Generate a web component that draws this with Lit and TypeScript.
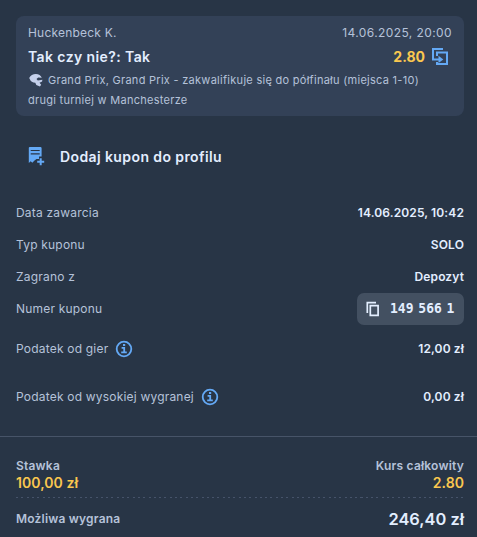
import { LitElement, html, css } from "lit";
import { customElement } from "lit/decorators.js";

const raceIcon = html`<svg class="race" width="14" height="14" viewBox="0 0 14 14"><path fill="currentColor" d="M.2 5C1.500 2.500 4 1 6.800 1c3 0 5 1.300 6 3.800L9.200 4.500 7.500 6l1.300 1.500 4.600-.7-.3 1.800-2.600 1.200 1.700 1.900-1.300 1.800-3.600-1.500-1-2.200C3.800 9.600 1.400 8 1 6.400z"/></svg>`;

const shareIcon = html`<svg class="share" width="18" height="18" viewBox="0 0 18 18" fill="none" stroke="currentColor" stroke-width="2"><path d="M12 2H2v10.500H8M6 9V5.500H16V17H6V15"/><path fill="currentColor" stroke="none" d="M7.500 8.700l4.800 3.700-4.800 3.700z"/></svg>`;

const couponIcon = html`<svg width="18" height="20" viewBox="0 0 18 20"><path fill="currentColor" fill-rule="evenodd" d="M1.600 0h10.800a1.200 1.200 0 0 1 1.200 1.200V9.500H11v2.500H8.500L6.500 13.500l-2.200 2.200-1.600-1.500L.8 16V1.200A1 1 0 0 1 1.600 0zM2.700 2.900v1.200h9V2.900zM2.700 6.200v1.200h9V6.200z"/><path d="M12.700 11.200v7M9.200 14.700h7" stroke="currentColor" stroke-width="2" fill="none"/></svg>`;

const infoIcon = html`<svg class="info" width="18" height="18" viewBox="0 0 18 18" fill="none" stroke="currentColor" stroke-width="1.800"><circle cx="9" cy="9" r="7.300"/><path d="M6.600 7.900h2.600v4.600M6.200 12.400h5.600"/><path d="M8 5h2.200" stroke-width="2"/></svg>`;

const copyIcon = html`<svg class="copy" width="16" height="16" viewBox="0 0 16 16" fill="none" stroke="currentColor" stroke-width="1.700"><path d="M11 1.700H2.300V12"/><path d="M5.300 4.600h7.800v9.800H5.300z"/></svg>`;

@customElement("app-root")
export class AppRoot extends LitElement {
  static styles = css`
    :host {
      display: block;
      height: 537px;
      overflow: hidden;
      background: #283546;
      color: #b5c2d9;
      font: 400 12px/20px Inter, "Liberation Sans", sans-serif;
      letter-spacing: 0.2px;
      white-space: nowrap;
    }
    svg { display: block; flex: none; }
    .card {
      box-sizing: border-box;
      height: 100px;
      margin: 16px 13px 0 16px;
      padding: 7px 12px 0;
      border-radius: 8px;
      background: #334157;
    }
    .line { display: flex; justify-content: space-between; align-items: center; }
    .date { letter-spacing: 0.4px; }
    .pick { height: 28px; font-size: 14px; font-weight: 600; color: #e3eeff; letter-spacing: 0.4px; }
    .odds { display: flex; align-items: center; gap: 6px; color: #fac74f; font-size: 14px; font-weight: 700; letter-spacing: 0; }
    .share { color: #64a9f5; margin: -3px 3px 0 0; }
    .event { margin-top: -1px; font-size: 11px; letter-spacing: 0.28px; }
    .race { display: inline-block; vertical-align: -3px; margin: 0 5px 0 1px; color: #c5d0eb; }
    .add { display: flex; align-items: center; gap: 14px; height: 24px; margin: 29px 0 0 28px; font-size: 14px; font-weight: 600; color: #e3eeff; letter-spacing: 0.4px; }
    .add svg { color: #64a9f5; }
    .details { padding: 28px 13px 0 16px; }
    .row { display: flex; justify-content: space-between; align-items: center; height: 32px; }
    .tax { height: 48px; }
    .label { display: flex; align-items: center; gap: 7px; }
    .info { color: #64a9f5; margin-top: -1px; }
    .value { font-weight: 600; color: #e3eeff; letter-spacing: 0.12px; }
    .number { box-sizing: border-box; display: flex; align-items: center; gap: 9px; width: 107px; height: 32px; margin-top: -1px; padding-left: 8px; border-radius: 7px; background: #435061; color: #e3eeff; }
    .digits { font: 700 13px/20px "DejaVu Sans Mono", monospace; letter-spacing: 0; word-spacing: -3px; transform: scaleY(1.08); }
    .summary { margin-top: 15px; padding: 20px 13px 0 16px; border-top: 1px solid #475468; font-weight: 600; }
    .heads { height: 18px; }
    .money { height: 15px; color: #fac74f; font-size: 14px; letter-spacing: 0.05px; }
    .rule { height: 1px; margin-top: 7px; background: repeating-linear-gradient(90deg, #46536a 0 2px, transparent 2px 5.3px); }
    .win { height: 42px; }
    .total { font-size: 16.4px; color: #e3eeff; letter-spacing: 0; }
  `;

  private row(label: string, value: string) {
    return html`<div class="row"><span>${label}</span><span class="value">${value}</span></div>`;
  }

  private tax(label: string, value: string) {
    return html`<div class="row tax"><span class="label">${label}${infoIcon}</span><span class="value">${value}</span></div>`;
  }

  render() {
    return html`
      <section class="card">
        <div class="line"><span>Huckenbeck K.</span><span class="date">14.06.2025, 20:00</span></div>
        <div class="line pick"><span>Tak czy nie?: Tak</span><span class="odds">2.80${shareIcon}</span></div>
        <div class="event">${raceIcon}Grand Prix, Grand Prix - zakwalifikuje się do półfinału (miejsca 1-10)<br>drugi turniej w Manchesterze</div>
      </section>
      <div class="add">${couponIcon}<span>Dodaj kupon do profilu</span></div>
      <section class="details">
        ${this.row("Data zawarcia", "14.06.2025, 10:42")}
        ${this.row("Typ kuponu", "SOLO")}
        ${this.row("Zagrano z", "Depozyt")}
        <div class="row"><span>Numer kuponu</span><span class="number">${copyIcon}<span class="digits">149 566 1</span></span></div>
        ${this.tax("Podatek od gier", "12,00 zł")}
        ${this.tax("Podatek od wysokiej wygranej", "0,00 zł")}
      </section>
      <section class="summary">
        <div class="line heads"><span>Stawka</span><span>Kurs całkowity</span></div>
        <div class="line money"><span>100,00 zł</span><span>2.80</span></div>
        <div class="rule"></div>
        <div class="line win"><span>Możliwa wygrana</span><span class="total">246,40 zł</span></div>
      </section>
    `;
  }
}
